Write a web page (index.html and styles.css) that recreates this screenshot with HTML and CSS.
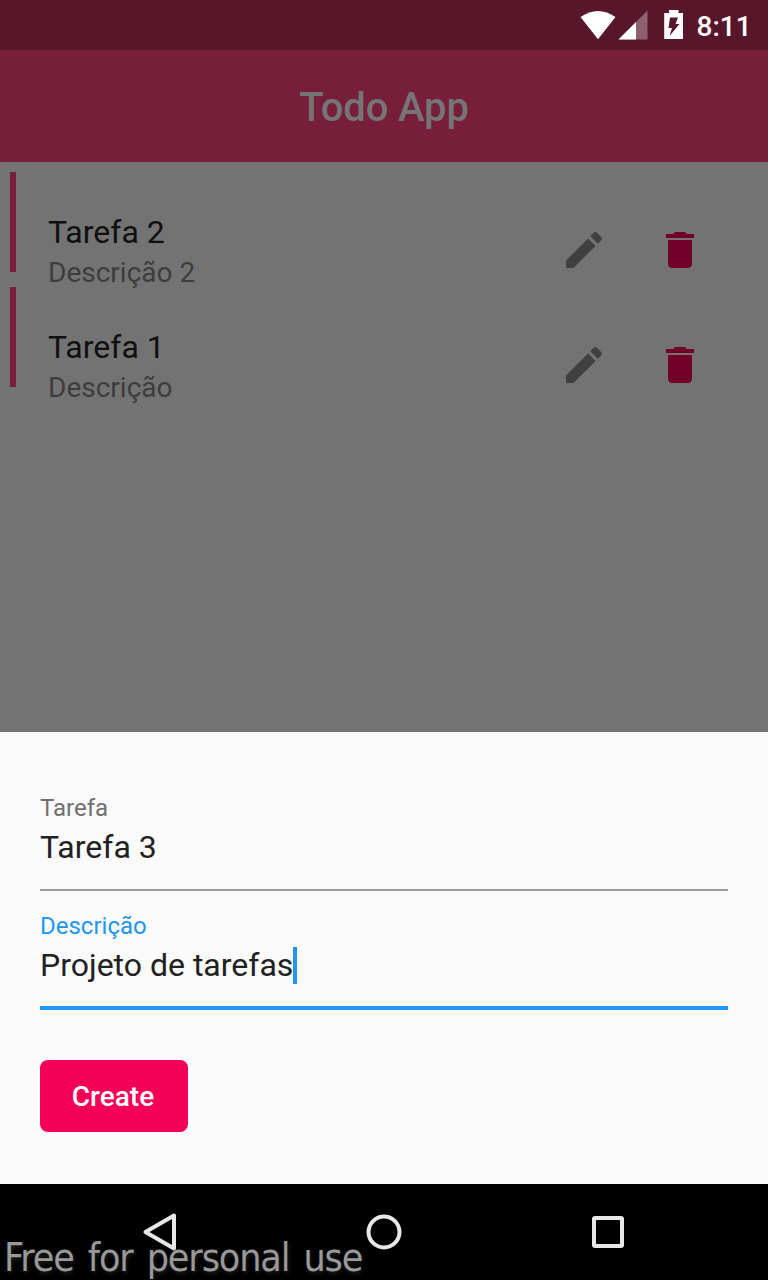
FILE: index.html
```html
<!DOCTYPE html>
<html lang="pt">
<head>
<meta charset="utf-8">
<title>Todo App</title>
<link rel="stylesheet" href="styles.css">
</head>
<body>
<svg class="defs" width="0" height="0" aria-hidden="true">
  <symbol id="edit" viewBox="0 0 24 24"><path d="M3 17.250V21h3.750L17.810 9.940l-3.750-3.750L3 17.250zM20.710 7.040a1 1 0 0 0 0-1.410l-2.340-2.340a1 1 0 0 0-1.410 0l-1.830 1.830 3.750 3.750 1.830-1.830z"/></symbol>
  <symbol id="delete" viewBox="0 0 24 24"><path d="M6 19c0 1.100.9 2 2 2h8c1.100 0 2-.9 2-2V7H6v12zM19 4h-3.500l-1-1h-5l-1 1H5v2h14V4z"/></symbol>
</svg>
<div class="screen">
  <header class="status">
    <svg class="signals" width="110" height="36" viewBox="578 6 110 36">
      <path fill="#fff" d="M580.500 17Q598 5 615.500 17L598 39.200z"/>
      <path fill="#8d6070" d="M647.500 10.500V39.500H618.500z"/>
      <path fill="#fff" d="M636 22V39.500H618.500z"/>
      <path fill="#fff" fill-rule="evenodd" d="M664.200 13H669V10h9.500v3H683v26H664.200zM670 17.500L668.500 28H672L669.500 36L679.500 24H675.500L678 17.500z"/>
    </svg>
    <span class="clock">8:11</span>
  </header>
  <h1 class="appbar">Todo App</h1>
  <main class="tasks">
    <article class="task">
      <div class="task-text"><div class="task-title">Tarefa 2</div><div class="task-desc">Descrição 2</div></div>
      <svg class="icon edit"><use href="#edit"/></svg>
      <svg class="icon delete"><use href="#delete"/></svg>
    </article>
    <article class="task">
      <div class="task-text"><div class="task-title">Tarefa 1</div><div class="task-desc">Descrição</div></div>
      <svg class="icon edit"><use href="#edit"/></svg>
      <svg class="icon delete"><use href="#delete"/></svg>
    </article>
  </main>
  <section class="sheet">
    <div class="field">
      <div class="label">Tarefa</div>
      <div class="value">Tarefa 3</div>
    </div>
    <div class="field focused">
      <div class="label">Descrição</div>
      <div class="value">Projeto de tarefas<span class="caret"></span></div>
    </div>
    <button class="create">Create</button>
  </section>
  <nav class="navbar">
    <svg width="40" height="44" viewBox="0 0 40 44"><path d="M34 5.500V38.500L5.500 22z"/></svg>
    <svg width="40" height="44" viewBox="0 0 40 44"><circle cx="20" cy="22" r="15.500"/></svg>
    <svg width="40" height="44" viewBox="0 0 40 44"><rect x="6" y="8" width="28" height="28" rx="1"/></svg>
    <span class="watermark">Free for personal use</span>
  </nav>
</div>
</body>
</html>
```
FILE: styles.css
```css
* { box-sizing: border-box; }
body { margin: 0; font-family: Roboto, sans-serif; }
.defs { position: absolute; }
.screen { width: 768px; height: 1280px; display: flex; flex-direction: column; overflow: hidden; background: #737373; }
.status { height: 50px; background: #58162b; display: flex; align-items: flex-start; padding: 6px 0 0 578px; }
.signals { display: block; flex: none; margin-right: 8.5px; }
.clock { color: #fff; font-size: 28px; font-weight: 500; line-height: 41px; }
.appbar { margin: 0; height: 112px; padding: 2px 0 0; background: #771e3a; color: #757575; font-size: 40px; font-weight: 500; line-height: 112px; text-align: center; letter-spacing: -0.15px; }
.tasks { height: 570px; padding: 10px 0 0 10px; display: flex; flex-direction: column; gap: 15px; }
.task { height: 100px; border-left: 6px solid #771e3a; padding: 41px 64px 0 32px; display: flex; align-items: flex-start; }
.task-text { flex: 1; }
.task-title { font-size: 32px; line-height: 38px; color: #101010; }
.task-desc { margin-top: 5px; font-size: 28px; line-height: 33px; color: #3d3d3d; }
.icon { width: 48px; height: 48px; margin: 13px 0 0 48px; }
.edit { fill: #404040; }
.delete { fill: #730028; }
.sheet { height: 452px; background: #fafafa; padding: 62px 40px 0; }
.field { height: 97px; border-bottom: 2px solid #999; }
.label { font-size: 24px; line-height: 28px; color: #707070; }
.value { display: flex; margin-top: 6px; font-size: 32px; line-height: 38px; color: #212121; }
.focused { margin-top: 21px; height: 98px; border-bottom: 4px solid #2196f3; }
.focused .label { color: #2196f3; }
.caret { width: 4px; height: 37px; margin-top: 1px; background: #2196f3; }
.create { display: block; width: 148px; height: 72px; margin-top: 50px; padding: 1px 2px 0 0; border: 0; border-radius: 8px; background: #f50057; color: #fff; font: 500 28px Roboto, sans-serif; }
.navbar { position: relative; height: 96px; background: #000; display: flex; justify-content: space-between; align-items: center; padding: 0 140px; }
.navbar svg { fill: none; stroke: #e8e8e8; stroke-width: 4; stroke-linejoin: round; }
.watermark { position: absolute; left: 4px; top: 51px; font: 39px/46px "DejaVu Sans Condensed", "DejaVu Sans", sans-serif; font-stretch: condensed; color: #999; white-space: nowrap; text-shadow: 1px 2px 4px #222; letter-spacing: -1.1px; word-spacing: 4px; }
```
